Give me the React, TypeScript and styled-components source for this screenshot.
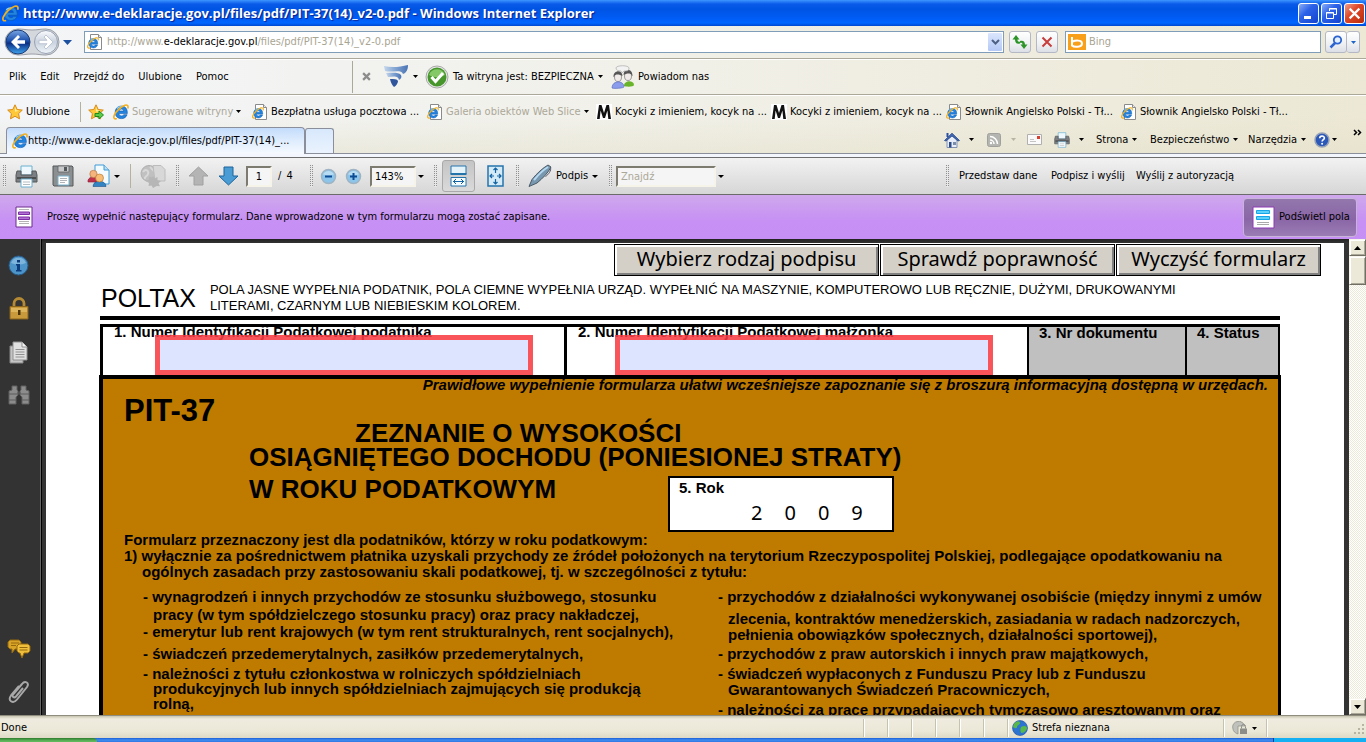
import React from "react";
import styled, { createGlobalStyle, css } from "styled-components";

const ui = `"DejaVu Sans Condensed", "Noto Sans", sans-serif`;
const humanist = `"Noto Sans", "Open Sans", sans-serif`;
const form = `"Liberation Sans", Arial, sans-serif`;

const Global = createGlobalStyle`
  * { box-sizing: border-box; }
  body { margin: 0; overflow: hidden; }
  button, input { font: inherit; color: inherit; margin: 0; padding: 0; border: 0; background: none; border-radius: 0; outline: 0; }
  a { color: inherit; text-decoration: none; }
  svg { display: block; flex: none; }
  ul, ol, h1, h2, p { margin: 0; padding: 0; list-style: none; font-weight: inherit; font-size: inherit; }
`;

const Window = styled.div`
  height: 100vh;
  display: flex;
  flex-direction: column;
  font: 11px/14px ${ui};
  color: #000;
  white-space: nowrap;
  overflow: hidden;
`;

/* ---------- title bar ---------- */
const TitleBar = styled.header`
  flex: none;
  height: 26px;
  display: flex;
  align-items: center;
  padding: 0 1px 0 2px;
  background: linear-gradient(#3d95ff 0, #0a5ae8 4px, #0054e3 9px, #005cf5 18px, #0066ff 23px, #0048d0 26px);
`;
const Title = styled.h1`
  flex: 1;
  padding-left: 4px;
  font: 700 13px/18px "Open Sans", "Noto Sans", sans-serif;
  color: #fff;
  text-shadow: 1px 1px 1px #0a1e8c;
`;
const WinButton = styled.button<{ $close?: boolean }>`
  width: 21px;
  height: 21px;
  margin-left: 2px;
  border: 1px solid #fff;
  border-radius: 3px;
  display: flex;
  align-items: center;
  justify-content: center;
  background: ${(p) =>
    p.$close
      ? "linear-gradient(135deg, #f0a08a, #e0492a 40%, #b82c08)"
      : "linear-gradient(135deg, #8aaef8, #2c62e8 40%, #1444d0)"};
`;

/* ---------- browser bars ---------- */
const Chrome = styled.div`
  flex: none;
  background:
    linear-gradient(rgba(236, 233, 216, 0) 70%, rgba(226, 222, 198, 0.45)),
    linear-gradient(90deg, #f3f5f8, #f1f0e8 50%, #ece8d5);
`;
const Bar = styled.div<{ $h: number; $line?: boolean }>`
  height: ${(p) => p.$h}px;
  display: flex;
  align-items: center;
  ${(p) => p.$line && css`border-bottom: 1px solid #aca899; box-shadow: 0 1px 0 #fff;`}
`;
const NavBar = styled(Bar)`
  padding: 0 6px 0 3px;
`;
const HistoryButtons = styled.div`
  width: 81px;
  display: flex;
  align-items: center;
`;
const Field = styled.label`
  height: 22px;
  display: flex;
  align-items: center;
  padding: 0 1px 0 2px;
  background: #fff;
  border: 1px solid #7f9db9;
`;
const AddressField = styled(Field)`
  flex: 1;
`;
const AddressText = styled.span`
  flex: 1;
  padding-left: 4px;
  color: #a9a593;
  b { font-weight: 400; color: #000; }
`;
const SearchField = styled(Field)`
  width: 256px;
  margin: 0 4px 0 7px;
  input { flex: 1; min-width: 0; padding-left: 3px; }
  input::placeholder { color: #a9a593; opacity: 1; }
`;
const SmallButton = styled.button<{ $w?: number }>`
  width: ${(p) => p.$w ?? 22}px;
  height: 22px;
  margin-left: 5px;
  display: flex;
  align-items: center;
  justify-content: center;
  border: 1px solid #b4b8c4;
  border-radius: 3px;
  background: linear-gradient(#fff, #eef0f2 60%, #dcdfe6);
`;
const GoGroup = styled.div`
  display: flex;
  ${SmallButton} { margin: 0; }
  ${SmallButton} + ${SmallButton} { border-left: 0; }
`;
const DropButton = styled.button`
  width: 14px;
  height: 18px;
  display: flex;
  align-items: center;
  justify-content: center;
  background: linear-gradient(#dbe6fd, #b4c8f6);
  border-radius: 1px;
`;
const MenuList = styled.nav`
  width: 353px;
  height: 32px;
  display: flex;
  align-items: center;
  padding-left: 9px;
  gap: 14px;
  border-right: 1px solid #aca899;
`;
const Tool = styled.button<{ $w?: number; $muted?: boolean; $gap?: number }>`
  flex: none;
  display: flex;
  align-items: center;
  gap: ${(p) => p.$gap ?? 4}px;
  width: ${(p) => (p.$w ? `${p.$w}px` : "auto")};
  color: ${(p) => (p.$muted ? "#aca899" : "#000")};
  text-align: left;
`;
const CloseTool = styled(Tool)`
  padding-left: 9px;
`;
const Separator = styled.i<{ $h: number }>`
  width: 1px;
  height: ${(p) => p.$h}px;
  background: #b5b19f;
`;
const FavBar = styled(Bar)`
  padding: 2px 0 0 7px;
`;
const FavAdd = styled.button`
  width: 32px;
  padding-left: 7px;
`;
const TabBar = styled(Bar)`
  align-items: flex-end;
  border-bottom: 1px solid #8b8f9c;
  padding-left: 6px;
`;
const Tab = styled.a`
  width: 299px;
  height: 27px;
  display: flex;
  align-items: center;
  padding-left: 5px;
  margin-bottom: -1px;
  border: 1px solid #8b8f9c;
  border-bottom: 0;
  border-radius: 4px 4px 0 0;
  background: linear-gradient(#c3dcfc, #dcebfd 45%, #f6faff);
`;
const NewTab = styled.button`
  width: 29px;
  height: 25px;
  border: 1px solid #8b8f9c;
  border-bottom: 0;
  border-radius: 3px 3px 0 0;
  background: linear-gradient(#d8e8fc, #eaf3fe);
`;
const Commands = styled.div`
  align-self: center;
  margin-left: auto;
  display: flex;
  align-items: center;
  height: 26px;
`;
const More = styled.button`
  align-self: flex-start;
  width: 13px;
  padding-top: 2px;
`;
const Strip = styled.div`
  flex: none;
  height: 4px;
  background: #f3f7fd;
  border-bottom: 1px solid #6d6d6d;
`;

/* ---------- reader bars ---------- */
const ReaderBar = styled.div`
  flex: none;
  height: 37px;
  display: flex;
  align-items: center;
  padding-left: 3px;
  background: linear-gradient(#f2f2f2, #d6d6d6);
  border-bottom: 1px solid #6b6b6b;
`;
const Group = styled.div<{ $w?: number }>`
  flex: none;
  width: ${(p) => (p.$w ? `${p.$w}px` : "auto")};
  display: flex;
  align-items: center;
`;
const Actions = styled(Group)`
  width: 420px;
  margin-left: auto;
`;
const Grip = styled.i<{ $space?: number }>`
  flex: none;
  width: 3px;
  height: 22px;
  margin-right: ${(p) => (p.$space ?? 8) + 1}px;
  background:
    linear-gradient(90deg, transparent 1px, #e8e8e8 1px 2px, transparent 2px),
    repeating-linear-gradient(#909090 0 1px, #e6e6e6 1px 2px);
`;
const Sunken = styled.input<{ $w: number }>`
  flex: none;
  width: ${(p) => p.$w}px;
  height: 21px;
  padding: 0 3px;
  background: #f5f5f5;
  border: 2px solid;
  border-color: #7d7b70 #f6f4e8 #f6f4e8 #7d7b70;
  &::placeholder { color: #aca899; opacity: 1; }
`;
const PageInput = styled(Sunken)`
  text-align: center;
`;
const ComboInput = styled(Sunken)`
  margin-right: 2px;
`;
const PageTotal = styled.span`
  width: 39px;
  padding-left: 6px;
  word-spacing: 2px;
`;
const IndentTool = styled(Tool)`
  padding-left: 9px;
`;
const Pressed = styled.button`
  width: 33px;
  height: 32px;
  margin-right: 12px;
  display: flex;
  align-items: center;
  justify-content: center;
  border: 1px solid #a9a9a9;
  border-radius: 3px;
  background: linear-gradient(#c4c4c4, #dadada);
`;
const MessageBar = styled.div`
  flex: none;
  height: 44px;
  display: flex;
  align-items: center;
  padding: 0 9px 0 15px;
  background: linear-gradient(#cfa8ec, #c690f4 60%, #c68ff5);
  p { flex: 1; padding-left: 14px; }
`;
const Highlight = styled.button`
  width: 114px;
  height: 39px;
  padding-left: 8px;
  display: flex;
  align-items: center;
  gap: 4px;
  border: 1px solid #c8b4d8;
  border-radius: 4px;
  background: linear-gradient(#9277ac, #8a66a6 55%, #9a7cb4);
`;

/* ---------- document area ---------- */
const Viewer = styled.main`
  flex: 1;
  min-height: 0;
  display: flex;
  background: #333;
`;
const SideBar = styled.nav`
  width: 42px;
  flex: none;
  display: flex;
  flex-direction: column;
  align-items: center;
  gap: 21px;
  padding: 16px 4px 11px 0;
  border-right: 1px solid #000;
  box-shadow: inset -1px 0 0 #666;
  background: #333;
  button:nth-child(5) { margin-top: auto; }
`;
const Canvas = styled.div`
  flex: 1;
  min-width: 0;
  padding: 4px 5px 0 4px;
  background: linear-gradient(#222, #333 4px);
  overflow: hidden;
`;
const Page = styled.article`
  min-height: 100%;
  padding: 1px 23px 0 54px;
  background: #fff;
  font: 700 15px/16px ${form};
`;
const FormButtons = styled.div`
  display: flex;
  justify-content: flex-end;
  gap: 1px;
`;
const FormButton = styled.button<{ $w: number }>`
  width: ${(p) => p.$w}px;
  height: 32px;
  padding-bottom: 2px;
  font: 400 20px/24px ${humanist};
  background: #d4d0c8;
  border: 1px solid #000;
  box-shadow: inset 1px 1px 0 1px #fff, inset -1px -1px 0 1px #808080;
`;
const Content = styled.section`
  margin-right: 41px;
`;
const Intro = styled.div`
  display: flex;
  align-items: center;
  gap: 14px;
  height: 44px;
  padding: 3px 0 0 1px;
  border-bottom: 4px solid #000;
  font-weight: 400;
  h2 { font-size: 25px; line-height: 24px; }
  p { font-size: 13px; line-height: 16px; }
`;
const Heads = styled.div`
  display: grid;
  grid-template-columns: 464fr 463fr 158fr 93fr;
  margin-top: 4px;
  height: 54px;
  border: solid #000;
  border-width: 3px 2px 3px 0;
`;
const Head = styled.div<{ $dark?: boolean }>`
  min-width: 0;
  border-left: ${(p) => (p.$dark ? 2 : 3)}px solid #000;
  padding-left: ${(p) => (p.$dark ? 10 : 11)}px;
  line-height: 12px;
  background: ${(p) => (p.$dark ? "#c0c0c0" : "#fff")};
  label { display: block; line-height: 10px; }
`;
const TaxInput = styled.input<{ $indent: number }>`
  position: relative;
  display: block;
  width: 378px;
  height: 40px;
  margin: -2px 0 0 ${(p) => p.$indent}px;
  padding: 0 6px;
  border: 5px solid rgba(249, 60, 68, 0.88);
  background: #dde4ff padding-box;
`;
const Sheet = styled.div`
  margin: -3px -1px 0;
  padding: 0 6px 0 21px;
  border: solid #000;
  border-width: 4px 3px 0 4px;
  background: #be7b00;
`;
const Hint = styled.p`
  padding-right: 4px;
  text-align: right;
  font-style: italic;
  line-height: 12px;
`;
const FormCode = styled.h2`
  padding-top: 10px;
  font-size: 31px;
  line-height: 20px;
`;
const Heading = styled.div`
  display: grid;
  grid-template-columns: 419px auto;
  justify-content: start;
  padding: 0 0 0 125px;
  font-size: 26px;
  line-height: 24px;
`;
const HeadingLine = styled.p<{ $in?: number }>`
  grid-column: 1 / -1;
  padding-left: ${(p) => p.$in ?? 0}px;
`;
const HeadingLast = styled.p`
  padding-top: 8px;
`;
const YearBox = styled.div`
  width: 226px;
  height: 56px;
  margin-top: 7px;
  padding: 2px 9px;
  border: 2px solid #000;
  background: #fff;
  font-size: 15px;
  line-height: 16px;
`;
const Year = styled.span`
  display: flex;
  gap: 22px;
  padding: 4px 0 0 72px;
  font: 400 20px/26px ${humanist};
`;
const Purpose = styled.p<{ $in?: number; $lh?: number }>`
  padding-left: ${(p) => p.$in ?? 0}px;
  line-height: ${(p) => p.$lh ?? 15}px;
`;
const Columns = styled.div`
  display: grid;
  grid-template-columns: 575px 1fr;
  padding: 7px 0 0 19px;
`;
const Entry = styled.li<{ $top?: number; $lh?: number }>`
  margin-top: ${(p) => p.$top ?? 0}px;
  padding-left: 10px;
  text-indent: -10px;
  line-height: ${(p) => p.$lh ?? 16}px;
  span { display: block; text-indent: 0; }
`;
const EntryRest = styled.li`
  margin-top: 5px;
  padding-left: 10px;
`;
const Scroll = styled.div`
  width: 17px;
  flex: none;
  display: flex;
  flex-direction: column;
  background: repeating-conic-gradient(#fff 0 25%, #ece9d8 0 50%) 0 0 / 2px 2px;
`;
const ScrollButton = styled.button<{ $h?: number }>`
  height: ${(p) => p.$h ?? 17}px;
  display: flex;
  align-items: center;
  justify-content: center;
  background: #ece9d8;
  border: 1px solid;
  border-color: #f8f6ec #716f64 #716f64 #f8f6ec;
  box-shadow: inset 1px 1px 0 #fff, inset -1px -1px 0 #aca899;
  &:last-child { margin-top: auto; }
`;

/* ---------- status and task bar ---------- */
const StatusBar = styled.footer`
  flex: none;
  height: 23px;
  display: flex;
  align-items: center;
  padding: 2px 0 0 1px;
  background: linear-gradient(#c9c5b2, #efecdf 3px, #ebe8d8 70%, #dedac6);
  border-top: 1px solid #8f8c80;
`;
const StatusText = styled.span`
  flex: 1;
`;
const Pane = styled.span<{ $w: number; $in?: number }>`
  width: ${(p) => p.$w}px;
  height: 18px;
  display: flex;
  align-items: center;
  gap: 4px;
  padding-left: ${(p) => p.$in ?? 4}px;
  border-left: 1px solid #c5c2b0;
  box-shadow: inset 1px 0 0 #fff;
`;
const TaskBar = styled.div`
  flex: none;
  height: 4px;
  display: flex;
  background: linear-gradient(#1c5fd6, #3f8df0 2px, #2f77e4);
`;
const Start = styled.i`
  width: 97px;
  border-radius: 0 6px 0 0;
  background: linear-gradient(#2f7c2f, #5fb85c 3px);
`;
const Tray = styled.i`
  width: 93px;
  margin-left: auto;
  background: #14b0f2;
  border-left: 1px solid #0a3c9c;
`;

/* ---------- icons ---------- */
const IEShape = () => (
  <>
    <path d="M14.300 9.600H5.900c.2 1.500 1.200 2.300 2.700 2.300 1 0 1.700-.4 2.200-1.200h3.300c-.9 2.500-2.900 3.900-5.700 3.900-3.700 0-6.200-2.500-6.200-6.200s2.500-6.300 6.200-6.300c3.900 0 6.200 2.800 5.900 7.500zM6 7h4.700C10.500 5.700 9.700 5 8.400 5 7.100 5 6.200 5.700 6 7z" fill="#2384e0" stroke="#0c58ac" strokeWidth=".6" />
    <path d="M4 4.500C5.500 3 7.300 2.500 9 2.800" fill="none" stroke="#8cd0fa" strokeWidth="1.200" />
    <path d="M14.800 4.400C15.600 1.700 14.300.5 12 1.200 8 2.500 2.700 7.500 1.200 11.400c-.9 2.600 0 4 2.700 3.200" fill="none" stroke="#f2b020" strokeWidth="1.600" />
  </>
);
const IE = ({ s = 17 }: { s?: number }) => (
  <svg width={s} height={s} viewBox="0 0 16 16"><IEShape /></svg>
);
const PageIE = () => (
  <svg width="16" height="16" viewBox="0 0 16 16">
    <path d="M3.500.5h8l3 3v12h-11z" fill="#fff" stroke="#8a8a8a" />
    <path d="M11.500.5v3h3" fill="#e8e8e8" stroke="#8a8a8a" />
    <svg x="0" y="3" width="12" height="12" viewBox="0 0 16 16"><IEShape /></svg>
  </svg>
);
const Caret = ({ c = "#000", w = 5 }: { c?: string; w?: number }) => (
  <svg width={w} height={w > 6 ? 5 : 3} viewBox="0 0 5 3" preserveAspectRatio="none"><path d="M0 0h5L2.500 3z" fill={c} /></svg>
);
const NavIcon = () => (
  <svg width="57" height="30" viewBox="0 0 57 30">
    <defs>
      <linearGradient id="bk" x1="0" y1="0" x2="0" y2="1"><stop offset="0" stopColor="#7aa6e4" /><stop offset=".45" stopColor="#1d50ac" /><stop offset=".55" stopColor="#0a2f86" /><stop offset="1" stopColor="#3fa4ee" /></linearGradient>
      <linearGradient id="fw" x1="0" y1="0" x2="0" y2="1"><stop offset="0" stopColor="#fbfcfe" /><stop offset=".5" stopColor="#c9d2de" /><stop offset="1" stopColor="#f0f5fa" /></linearGradient>
    </defs>
    <path d="M15 2c6 0 8 1 14 1s8-1 14-1a13 13 0 0 1 0 26c-6 0-8-1-14-1s-8 1-14 1A13 13 0 0 1 15 2z" fill="#d4d7db" stroke="#9a9fa8" />
    <circle cx="15" cy="15" r="12" fill="url(#bk)" stroke="#1c3c78" />
    <circle cx="43" cy="15" r="11.500" fill="url(#fw)" stroke="#97a2b2" />
    <path d="M8 15l7-7 2 2-3 3.300h8v3.400h-8l3 3.300-2 2z" fill="#fff" />
    <path d="M50 15l-7-7-2 2 3 3.300h-8v3.400h8L41 20l2 2z" fill="#fff" stroke="#b2bccb" strokeWidth=".8" />
  </svg>
);
const Star = ({ add }: { add?: boolean }) => (
  <svg width="16" height="16" viewBox="0 0 16 16">
    <path d="M8 .8l2.200 4.700 5.100.6-3.700 3.500.9 5.200L8 12.300l-4.500 2.500.9-5.200L.7 6.100l5.100-.6z" fill="#ffc838" stroke="#d88a18" />
    <path d="M8 3l1.300 3.300 3 .4-4.300 1z" fill="#fff0a8" />
    {add && <path d="M7 9.500h4V7l4.500 4-4.500 4v-2.500H7z" fill="#5ccc48" stroke="#1f8a1c" />}
  </svg>
);
const Shield = () => (
  <svg width="24" height="23" viewBox="0 0 24 23">
    <defs><linearGradient id="fs" x1="0" y1="0" x2="1" y2="0"><stop offset="0" stopColor="#c4d6ec" /><stop offset=".5" stopColor="#7fa2d0" /><stop offset="1" stopColor="#4a74b4" /></linearGradient></defs>
    <path d="M0 1c8 2 16 1 24-1 0 5-2 8-5 9C17 4 8 8 1 6z" fill="url(#fs)" />
    <path d="M2 8c7 0 12-1 15 2 1 2 0 4-2 5C14 10 9 12 4 12z" fill="url(#fs)" />
    <path d="M6 14c4 0 7 0 8 2 0 2-2 5-4 6-2-2-3-4-4-8z" fill="#2f559c" />
  </svg>
);
const Check = () => (
  <svg width="24" height="24" viewBox="0 0 24 24">
    <circle cx="12" cy="12" r="11" fill="#e8e8e8" stroke="#a8a8a8" />
    <circle cx="12" cy="12" r="9.500" fill="#46962c" />
    <path d="M4 10a8.500 8.500 0 0 1 16 0c-5 3-11 3-16 0z" fill="#84c868" />
    <path d="M6.500 12l4 4.500L18 8" fill="none" stroke="#fff" strokeWidth="3" />
  </svg>
);
const People = () => (
  <svg width="24" height="24" viewBox="0 0 24 24">
    <ellipse cx="7" cy="12" rx="3.500" ry="4.500" fill="#f0eae8" stroke="#777" strokeWidth=".7" />
    <path d="M2.500 12c-.5-7 9-8 9-1-2-1-5-2-7-1-1 0-1 2-2 2z" fill="#555" />
    <ellipse cx="17" cy="11" rx="3.500" ry="4.500" fill="#f0eae8" stroke="#777" strokeWidth=".7" />
    <path d="M12.500 10c0-7 9-7 9 1-1 0-1-2-2-2-2-1-5 0-7 1z" fill="#555" />
    <path d="M5 3c0-3 13-3 13 0s-2 3-5 3l-2 2-1-2C7 6 5 5 5 3z" fill="#f2f2f2" stroke="#aaa" strokeWidth=".7" />
    <path d="M13 21c0-6 10-6 10-1 0 2-8 2-10 1z" fill="#6ab42c" />
    <path d="M1 23c0-8 12-8 12-1 0 1-10 2-12 1z" fill="#8c9cec" stroke="#5666b8" strokeWidth=".6" />
  </svg>
);
const EmM = () => (
  <svg width="16" height="16" viewBox="0 0 16 16"><path d="M0 0h16v16H0z" fill="#fff" /><path d="M1 15L3 1h2.500L8 9l2.500-8H13l2 14h-2.700L11.400 6.500 9 14H7L4.600 6.500 3.700 15z" fill="#111" /></svg>
);
const Home = () => (
  <svg width="16" height="16" viewBox="0 0 16 16">
    <path d="M2.500 1h2v4h-2z" fill="#2a50a0" />
    <path d="M3 8l5-5 5 5v7.500H3z" fill="#e6edf8" stroke="#8090b0" />
    <path d="M.5 8.500L8 1.200l7.500 7.300-1.500.5L8 4 2 9z" fill="#4068b0" stroke="#26488c" strokeWidth=".8" />
    <path d="M5 10h2.500v5.500H5z" fill="#2a4a88" /><path d="M9 10h3v3H9z" fill="#7c8cac" />
  </svg>
);
const Rss = () => (
  <svg width="14" height="14" viewBox="0 0 14 14"><rect x=".5" y=".5" width="13" height="13" rx="2" fill="#b4b4b0" stroke="#a0a09c" /><path d="M3 7a4 4 0 0 1 4 4M3 3.500A7.500 7.500 0 0 1 10.500 11" fill="none" stroke="#fff" strokeWidth="1.500" /><circle cx="4" cy="10" r="1.200" fill="#fff" /></svg>
);
const Mail = () => (
  <svg width="15" height="11" viewBox="0 0 15 11"><path d="M.5.5h14v10H.5z" fill="#fafafa" stroke="#b0b0b0" /><path d="M10 2h3v3h-3z" fill="#d84030" /><path d="M3 5.500h4M3 7.500h6" stroke="#c4c4c4" /></svg>
);
const Printer = ({ s = 16 }: { s?: number }) => (
  <svg width={s} height={s} viewBox="0 0 23 23">
    <path d="M6 1h11v9H6z" fill="#eef8fc" stroke="#6cb0d0" />
    <path d="M2 6h4v4h11V6h4l1 4v7H1v-7z" fill="#7c8084" stroke="#55585a" />
    <path d="M2 12h19v2H2z" fill="#4c4e50" />
    <path d="M6 14h11v8H6z" fill="#fff" stroke="#6cb0d0" /><path d="M8 17h7M8 19.500h7" stroke="#b4bcc0" />
  </svg>
);
const Help = () => (
  <svg width="16" height="16" viewBox="0 0 16 16"><circle cx="8" cy="8" r="7" fill="#2c58b8" stroke="#98a2b6" strokeWidth="1.500" /><path d="M5.700 6.300C5.700 3.300 10.400 3.400 10.400 6c0 1.700-2.300 1.600-2.300 3.600" fill="none" stroke="#fff" strokeWidth="1.600" /><circle cx="8.100" cy="11.800" r="1" fill="#fff" /></svg>
);
const Save = () => (
  <svg width="22" height="22" viewBox="0 0 22 22"><path d="M1 1h19l1 1v19H2l-1-1z" fill="#8c8f92" stroke="#55585a" /><path d="M6 1h11v6H6z" fill="#c8cacc" stroke="#606264" strokeWidth=".8" /><path d="M12 2h3v4h-3z" fill="#55585a" /><path d="M6 11h11v9H6z" fill="#fff" stroke="#78b4d0" /><path d="M8 13.500h7M8 15.500h7M8 17.500h5" stroke="#b0b4b8" /></svg>
);
const Share = () => (
  <svg width="23" height="24" viewBox="0 0 23 24"><path d="M8 1h9l5 5v14H8z" fill="#f4fbff" stroke="#3c9cd8" /><path d="M17 1v5h5" fill="#bcdcf0" stroke="#3c9cd8" /><path d="M1 18c-1-6 10-7 10 0z" fill="#c0304c" stroke="#8c1c34" strokeWidth=".6" /><circle cx="6.500" cy="10" r="3.700" fill="#f4b47c" stroke="#b06a38" strokeWidth=".6" /><path d="M6 22.500c0-7 13-7 13 0z" fill="#3484c4" stroke="#1c548c" strokeWidth=".6" /><circle cx="12.500" cy="14" r="4" fill="#f8bc74" stroke="#b07028" strokeWidth=".6" /></svg>
);
const Globe = () => (
  <svg width="26" height="24" viewBox="0 0 26 24"><circle cx="9" cy="9.500" r="8" fill="#c0c0c0" stroke="#b0b0b0" /><path d="M3 8c3-4 6-1 5 2s-4 2-3 5M10 3c3 2 2 4 5 4" fill="none" stroke="#d8d8d8" strokeWidth="2" /><path d="M13 1.500h8l4 4V17H15z" fill="#d8d8d8" stroke="#bcbcbc" /><path d="M13 12l1.500 2.500 3-1.500 0 3.200 3.500.8-2.500 2.300 1.500 3-3.200-.3L13 24l-1.500-2.500-3 .5.500-3L6 17l3-1.500L9 12.500l3 1z" fill="#b6b6b6" /></svg>
);
const Arrow = ({ down }: { down?: boolean }) => (
  <svg width="21" height="20" viewBox="0 0 21 20"><path d={down ? "M6 1h9v9h5l-9.500 9L1 10h5z" : "M6 19h9v-9h5L10.500 1 1 10h5z"} fill={down ? "#4a9cd4" : "#b4b4b4"} stroke={down ? "#1c649c" : "#a0a0a0"} /></svg>
);
const Zoom = ({ plus }: { plus?: boolean }) => (
  <svg width="17" height="17" viewBox="0 0 17 17"><circle cx="8.500" cy="8.500" r="7" fill="#8cc4ea" stroke="#9fb4c2" strokeWidth="1.500" /><path d="M3 6.500a6 6 0 0 1 11 0c-3 1-8 1-11 0z" fill="#b8dcf2" /><path d={plus ? "M5 8.500h7M8.500 5v7" : "M5 8.500h7"} stroke="#0c4c94" strokeWidth="2" /></svg>
);
const FitWidth = () => (
  <svg width="17" height="22" viewBox="0 0 17 22"><path d="M1 1h15v8H1z" fill="#e4f2fa" stroke="#2474ac" /><path d="M.5 9h16" stroke="#2474ac" strokeWidth="2" /><path d="M1 12.500h15V21H1z" fill="#f6fbff" stroke="#2474ac" /><path d="M3 16.500h11M6 14l-2.500 2.500L6 19M11 14l2.500 2.500L11 19" fill="none" stroke="#1464a4" /></svg>
);
const FitPage = () => (
  <svg width="17" height="22" viewBox="0 0 17 22"><path d="M1 1h15v20H1z" fill="#d4eaf6" stroke="#2474ac" strokeWidth="1.500" /><path d="M8.500 3v5M8.500 14v5M3 11h4M10 11h4M6.500 5l2-2 2 2M6.500 17l2 2 2-2M5 9l-2 2 2 2M12 9l2 2-2 2" fill="none" stroke="#1464a4" strokeWidth="1.200" /></svg>
);
const Pen = () => (
  <svg width="24" height="24" viewBox="0 0 24 24"><path d="M1 22.500l3-7C9 9 15 4 20 1l3 2c-3 6-8 11-14 16z" fill="#7898b0" stroke="#4a5a66" /><path d="M6 16C11 10 15 6 20 3" stroke="#b4d8f0" strokeWidth="2" fill="none" /><path d="M22.500 3.500c1 3-2 7-5 9" stroke="#556" fill="none" /></svg>
);
const FormIcon = ({ blue }: { blue?: boolean }) =>
  blue ? (
    <svg width="23" height="23" viewBox="0 0 23 23"><path d="M1 1h21v21H1z" fill="#fff" stroke="#8c3cb4" /><path d="M4.500 4.500h13v3h-13zM4.500 10.500h13v3h-13z" fill="#5cd0f8" stroke="#14a4e8" /><path d="M5 16.500h12M5 18.500h12" stroke="#aaa" /></svg>
  ) : (
    <svg width="18" height="22" viewBox="0 0 18 22"><path d="M1 1h16v20H1z" fill="#fff" stroke="#6c2c8c" /><path d="M4 3.500h10M4 15.500h10M4 17.500h10" stroke="#b4b4b4" /><path d="M3.500 6h11v2.500h-11zM3.500 11h11v2.500h-11z" fill="#b070d4" stroke="#7c2ca4" /></svg>
  );
const Info = () => (
  <svg width="21" height="21" viewBox="0 0 21 21"><circle cx="10.500" cy="10.500" r="9.500" fill="#4d94c8" stroke="#285c88" /><path d="M3 8a8 8 0 0 1 15 0c-5 2-10 2-15 0z" fill="#7cb4dc" /><path d="M9 5h3v2.500H9zM8 9h4v6h1.500v1.500H8V15h1v-4.500H8z" fill="#0c3c7c" /></svg>
);
const Lock = () => (
  <svg width="20" height="23" viewBox="0 0 20 23"><path d="M5 11V6.500a5 5 0 0 1 10 0V11" fill="none" stroke="#b48a34" strokeWidth="2.800" /><path d="M1 9.500h18V22H1z" fill="#c89a3c" stroke="#8a6418" /><path d="M2 11h16v4H2z" fill="#dcb45c" /><path d="M9 13h2.500v5H9z" fill="#4c3408" /></svg>
);
const Pages = () => (
  <svg width="20" height="23" viewBox="0 0 20 23"><path d="M1 5h13v17H1z" fill="#c4c4c4" stroke="#888" /><path d="M4 1h9l5 5v13H4z" fill="#e0e0e0" stroke="#909090" /><path d="M13 1v5h5" fill="#f4f4f4" stroke="#909090" /><path d="M6.500 8.500h9M6.500 11h9M6.500 13.500h9M6.500 16h9" stroke="#909090" /></svg>
);
const Binoculars = () => (
  <svg width="22" height="20" viewBox="0 0 22 20"><path d="M4 1h5v4l1 1v4l-2 2v7H1V6l3-1zM13 1h5v4l3 1v13h-7v-7l-2-2V6l1-1z" fill="#8c8c8c" stroke="#606060" /><path d="M1 9h9M12 9h9M1 15h7M14 15h7M9 8h4" stroke="#5c5c5c" /></svg>
);
const Comments = () => (
  <svg width="24" height="20" viewBox="0 0 24 20"><path d="M3 1h9l2 2v6l-2 1H8l-3 4v-4H3L1 8V3z" fill="#d8a428" stroke="#94680c" /><path d="M4 4h8M4 6.500h5" stroke="#94680c" /><path d="M12 5h9l2 2v5l-2 2h-4l-2 5-2-5h-1l-2-2V7z" fill="#f0c03c" stroke="#94680c" /><path d="M12.500 8.500h8M12.500 11h8" stroke="#94680c" /></svg>
);
const Clip = () => (
  <svg width="22" height="24" viewBox="0 0 22 24"><path d="M15 8l-7 8.500c-2 2-4.500 0-3-2L14 4c3-4 8-1 5 3L9 19.500c-4 5-10 1-6-4L11 6" fill="none" stroke="#a8a8a8" strokeWidth="2" /></svg>
);
const Earth = () => (
  <svg width="16" height="16" viewBox="0 0 16 16"><circle cx="8" cy="8" r="7.500" fill="#2c74d0" stroke="#1c4c98" strokeWidth=".6" /><path d="M2 4c3-4 6-3 6-1s-3 2-3 4-3 1-4 0zM9 7c3-2 6-1 6 1s-3 5-5 5-2-4-1-6z" fill="#58b848" /></svg>
);
const Bing = () => (
  <svg width="18" height="16" viewBox="0 0 18 16"><path d="M0 0h18v16H0z" fill="#f9a01b" /><path d="M4 3v8.500c2 2 10 2 10-2s-7-3-9.500-2" fill="none" stroke="#fff" strokeWidth="2" /></svg>
);
const Lens = () => (
  <svg width="14" height="14" viewBox="0 0 14 14"><circle cx="8.500" cy="5" r="3.700" fill="#e4f0ff" stroke="#2c64d0" strokeWidth="1.800" /><path d="M6 8l-4.500 4.500" stroke="#2c64d0" strokeWidth="2.500" /></svg>
);
const Refresh = () => (
  <svg width="16" height="16" viewBox="0 0 16 16"><path d="M8 9.500c-3 1-5-.5-5-4H.5L4 1l3.500 4.500H5.500c0 2 1 2.500 2.500 2zM8 7c3-1 5 .500 5 3.500h2.500L12 15l-3.500-4.500h2C10.500 9 9.500 8.500 8 9z" fill="#2c9428" /></svg>
);
const Cross = ({ c, w = 2, s = 12 }: { c: string; w?: number; s?: number }) => (
  <svg width={s} height={s} viewBox="0 0 12 12"><path d="M1.500 1.500l9 9M10.500 1.500l-9 9" stroke={c} strokeWidth={w} /></svg>
);
const Privacy = () => (
  <svg width="16" height="14" viewBox="0 0 16 14"><path d="M1 8a6 6 0 0 1 10-6l2 3H6v8C3 12 1 10 1 8z" fill="#c0c0bc" stroke="#94948e" strokeWidth=".8" /><path d="M8 7.500h7V13H8z" fill="#8c8c88" /><path d="M9.500 7.500V5.500a2 2 0 0 1 4 0v2" fill="none" stroke="#8c8c88" /></svg>
);
const SizeGrip = () => (
  <svg width="14" height="14" viewBox="0 0 14 14"><path d="M11 3h2v2h-2zM7 7h2v2H7zM11 7h2v2h-2zM3 11h2v2H3zM7 11h2v2H7zM11 11h2v2h-2z" fill="#b8b4a2" /></svg>
);
const ScrollArrow = ({ down }: { down?: boolean }) => (
  <svg width="7" height="4" viewBox="0 0 7 4"><path d={down ? "M0 0h7L3.500 4z" : "M0 4h7L3.500 0z"} fill="#000" /></svg>
);

export default function App() {
  return (
    <Window>
      <Global />
      <TitleBar>
        <IE />
        <Title>http://www.e-deklaracje.gov.pl/files/pdf/PIT-37(14)_v2-0.pdf - Windows Internet Explorer</Title>
        <WinButton aria-label="Minimalizuj"><svg width="13" height="13"><path d="M2 9h7v3H2z" fill="#fff" /></svg></WinButton>
        <WinButton aria-label="Przywróć">
          <svg width="13" height="13" fill="none" stroke="#fff"><path d="M4.500 4V1.500h7v6H9M4 2h8M1.500 5.500h7v6h-7zM1 6h8" /></svg>
        </WinButton>
        <WinButton $close aria-label="Zamknij"><Cross c="#fff" s={13} /></WinButton>
      </TitleBar>

      <Chrome>
        <NavBar $h={33} $line>
          <HistoryButtons>
            <Tool aria-label="Wstecz i dalej" $gap={3}><NavIcon /><Caret c="#1c50a0" w={9} /></Tool>
          </HistoryButtons>
          <AddressField as="div">
            <PageIE />
            <AddressText>http://www.<b>e-deklaracje.gov.pl</b>/files/pdf/PIT-37(14)_v2-0.pdf</AddressText>
            <DropButton aria-label="Adresy"><svg width="9" height="6"><path d="M1 1l3.500 3.500L8 1" fill="none" stroke="#4d6185" strokeWidth="2" /></svg></DropButton>
          </AddressField>
          <SmallButton aria-label="Odśwież"><Refresh /></SmallButton>
          <SmallButton aria-label="Zatrzymaj"><Cross c="#c83c3c" /></SmallButton>
          <SearchField>
            <Bing />
            <input placeholder="Bing" aria-label="Szukaj" />
          </SearchField>
          <GoGroup>
            <SmallButton aria-label="Szukaj"><Lens /></SmallButton>
            <SmallButton $w={13} aria-label="Opcje"><Caret c="#1c64c8" /></SmallButton>
          </GoGroup>
        </NavBar>

        <Bar $h={36} $line>
          <MenuList>
            <Tool>Plik</Tool><Tool>Edit</Tool><Tool>Przejdź do</Tool><Tool>Ulubione</Tool><Tool>Pomoc</Tool>
          </MenuList>
          <CloseTool $w={31} aria-label="Zamknij pasek"><Cross c="#8c8c8c" s={9} w={3} /></CloseTool>
          <Tool $w={41} $gap={5} aria-label="Ochrona"><Shield /><Caret /></Tool>
          <Tool $w={186}><Check />Ta witryna jest: BEZPIECZNA<Caret /></Tool>
          <Tool $gap={3}><People />Powiadom nas</Tool>
        </Bar>

        <FavBar $h={31}>
          <Tool $w={73} $gap={3}><Star />Ulubione</Tool>
          <Separator $h={20} />
          <FavAdd aria-label="Dodaj"><Star add /></FavAdd>
          <Tool $w={139} $muted $gap={3}><IE s={16} />Sugerowane witryny<Caret /></Tool>
          <Tool $w={175} $gap={3}><PageIE />Bezpłatna usługa pocztowa ...</Tool>
          <Tool $w={169} $muted $gap={3}><PageIE />Galeria obiektów Web Slice<Caret /></Tool>
          <Tool $w={175} $gap={3}><EmM />Kocyki z imieniem, kocyk na ...</Tool>
          <Tool $w={175} $gap={3}><EmM />Kocyki z imieniem, kocyk na ...</Tool>
          <Tool $w={175} $gap={3}><PageIE />Słownik Angielsko Polski - Tł...</Tool>
          <Tool $w={175} $gap={3}><PageIE />Słownik Angielsko Polski - Tł...</Tool>
        </FavBar>

        <TabBar $h={28}>
          <Tab href="#"><IE s={16} />http://www.e-deklaracje.gov.pl/files/pdf/PIT-37(14)_...</Tab>
          <NewTab aria-label="Nowa karta" />
          <Commands>
            <Tool $w={43} $gap={9} aria-label="Start"><Home /><Caret /></Tool>
            <Tool $w={40} $gap={10} aria-label="Kanały"><Rss /><Caret c="#b8b4a4" /></Tool>
            <Tool $w={27} aria-label="Poczta"><Mail /></Tool>
            <Tool $w={42} $gap={9} aria-label="Drukuj"><Printer /><Caret /></Tool>
            <Tool $w={54}>Strona<Caret /></Tool>
            <Tool $w={98}>Bezpieczeństwo<Caret /></Tool>
            <Tool $w={66}>Narzędzia<Caret /></Tool>
            <Tool $w={39} $gap={2} aria-label="Pomoc"><Help /><Caret /></Tool>
            <More aria-label="Więcej"><svg width="9" height="7" fill="none" stroke="#000" strokeWidth="1.500"><path d="M1 1l2.500 2.500L1 6M5 1l2.500 2.500L5 6" /></svg></More>
          </Commands>
        </TabBar>
      </Chrome>
      <Strip />

      <ReaderBar>
        <Group $w={173}>
          <Grip />
          <Tool $w={37} aria-label="Drukuj"><Printer s={23} /></Tool>
          <Tool $w={35} aria-label="Zapisz"><Save /></Tool>
          <Tool $w={43} aria-label="Udostępnij"><Share /><Caret w={6} /></Tool>
          <Separator $h={24} />
          <IndentTool aria-label="Publikuj"><Globe /></IndentTool>
        </Group>
        <Group $w={134}>
          <Grip />
          <Tool $w={30} aria-label="Poprzednia"><Arrow /></Tool>
          <Tool $w={28} aria-label="Następna"><Arrow down /></Tool>
          <PageInput $w={26} defaultValue="1" aria-label="Strona" />
          <PageTotal>/ 4</PageTotal>
        </Group>
        <Group $w={124}>
          <Grip $space={6} />
          <Tool $w={25} aria-label="Pomniejsz"><Zoom /></Tool>
          <Tool $w={25} aria-label="Powiększ"><Zoom plus /></Tool>
          <ComboInput $w={46} defaultValue="143%" aria-label="Powiększenie" />
          <Caret w={6} />
        </Group>
        <Group $w={82}>
          <Grip $space={4} />
          <Pressed aria-label="Szerokość strony"><FitWidth /></Pressed>
          <Tool aria-label="Cała strona"><FitPage /></Tool>
        </Group>
        <Group $w={93}>
          <Grip />
          <Tool><Pen />Podpis<Caret w={6} /></Tool>
        </Group>
        <Group>
          <Grip $space={3} />
          <ComboInput $w={100} placeholder="Znajdź" aria-label="Znajdź" />
          <Caret w={6} />
        </Group>
        <Actions>
          <Grip $space={9} />
          <Tool $w={92}>Przedstaw dane</Tool>
          <Tool $w={85}>Podpisz i wyślij</Tool>
          <Tool>Wyślij z autoryzacją</Tool>
        </Actions>
      </ReaderBar>

      <MessageBar>
        <FormIcon />
        <p>Proszę wypełnić następujący formularz. Dane wprowadzone w tym formularzu mogą zostać zapisane.</p>
        <Highlight><FormIcon blue />Podświetl pola</Highlight>
      </MessageBar>

      <Viewer>
        <SideBar>
          <button aria-label="Informacje"><Info /></button>
          <button aria-label="Zabezpieczenia"><Lock /></button>
          <button aria-label="Strony"><Pages /></button>
          <button aria-label="Szukaj"><Binoculars /></button>
          <button aria-label="Komentarze"><Comments /></button>
          <button aria-label="Załączniki"><Clip /></button>
        </SideBar>
        <Canvas>
          <Page>
            <FormButtons>
              <FormButton $w={265}>Wybierz rodzaj podpisu</FormButton>
              <FormButton $w={235}>Sprawdź poprawność</FormButton>
              <FormButton $w={205}>Wyczyść formularz</FormButton>
            </FormButtons>
            <Content>
              <Intro>
                <h2>POLTAX</h2>
                <p>
                  POLA JASNE WYPEŁNIA PODATNIK, POLA CIEMNE WYPEŁNIA URZĄD. WYPEŁNIĆ NA MASZYNIE, KOMPUTEROWO LUB RĘCZNIE, DUŻYMI, DRUKOWANYMI
                  <br />
                  LITERAMI, CZARNYM LUB NIEBIESKIM KOLOREM.
                </p>
              </Intro>
              <Heads>
                <Head>
                  <label htmlFor="nip1">1. Numer Identyfikacji Podatkowej podatnika</label>
                  <TaxInput id="nip1" $indent={41} />
                </Head>
                <Head>
                  <label htmlFor="nip2">2. Numer Identyfikacji Podatkowej małżonka</label>
                  <TaxInput id="nip2" $indent={37} />
                </Head>
                <Head $dark>3. Nr dokumentu</Head>
                <Head $dark>4. Status</Head>
              </Heads>
              <Sheet>
                <Hint>Prawidłowe wypełnienie formularza ułatwi wcześniejsze zapoznanie się z broszurą informacyjną dostępną w urzędach.</Hint>
                <FormCode>PIT-37</FormCode>
                <Heading>
                  <HeadingLine $in={106}>ZEZNANIE O WYSOKOŚCI</HeadingLine>
                  <HeadingLine>OSIĄGNIĘTEGO DOCHODU (PONIESIONEJ STRATY)</HeadingLine>
                  <HeadingLast>W ROKU PODATKOWYM</HeadingLast>
                  <YearBox>
                    5. Rok
                    <Year><span>2</span><span>0</span><span>0</span><span>9</span></Year>
                  </YearBox>
                </Heading>
                <Purpose $lh={16}>Formularz przeznaczony jest dla podatników, którzy w roku podatkowym:</Purpose>
                <Purpose>1) wyłącznie za pośrednictwem płatnika uzyskali przychody ze źródeł położonych na terytorium Rzeczypospolitej Polskiej, podlegające opodatkowaniu na</Purpose>
                <Purpose $in={18} $lh={18}>ogólnych zasadach przy zastosowaniu skali podatkowej, tj. w szczególności z tytułu:</Purpose>
                <Columns>
                  <ul>
                    <Entry $lh={18}>- wynagrodzeń i innych przychodów ze stosunku służbowego, stosunku<span>pracy (w tym spółdzielczego stosunku pracy) oraz pracy nakładczej,</span></Entry>
                    <Entry>- emerytur lub rent krajowych (w tym rent strukturalnych, rent socjalnych),</Entry>
                    <Entry $top={6}>- świadczeń przedemerytalnych, zasiłków przedemerytalnych,</Entry>
                    <Entry $top={4} $lh={15}>- należności z tytułu członkostwa w rolniczych spółdzielniach<span>produkcyjnych lub innych spółdzielniach zajmujących się produkcją</span><span>rolną,</span></Entry>
                  </ul>
                  <ul>
                    <Entry $lh={18}>- przychodów z działalności wykonywanej osobiście (między innymi z umów</Entry>
                    <EntryRest>zlecenia, kontraktów menedżerskich, zasiadania w radach nadzorczych,<br />pełnienia obowiązków społecznych, działalności sportowej),</EntryRest>
                    <Entry $top={3}>- przychodów z praw autorskich i innych praw majątkowych,</Entry>
                    <Entry $top={4}>- świadczeń wypłaconych z Funduszu Pracy lub z Funduszu<span>Gwarantowanych Świadczeń Pracowniczych,</span></Entry>
                    <Entry $top={4}>- należności za pracę przypadających tymczasowo aresztowanym oraz</Entry>
                  </ul>
                </Columns>
              </Sheet>
            </Content>
          </Page>
        </Canvas>
        <Scroll>
          <ScrollButton aria-label="W górę"><ScrollArrow /></ScrollButton>
          <ScrollButton $h={29} aria-label="Suwak" />
          <ScrollButton aria-label="W dół"><ScrollArrow down /></ScrollButton>
        </Scroll>
      </Viewer>

      <StatusBar>
        <StatusText>Done</StatusText>
        {[0, 1, 2, 3, 4, 5].map((i) => <Pane key={i} $w={24} />)}
        <Pane $w={216}><Earth />Strefa nieznana</Pane>
        <Pane $w={43} $in={8}><Privacy /><Caret /></Pane>
        <Pane $w={100} $in={84}><SizeGrip /></Pane>
      </StatusBar>
      <TaskBar><Start /><Tray /></TaskBar>
    </Window>
  );
}
